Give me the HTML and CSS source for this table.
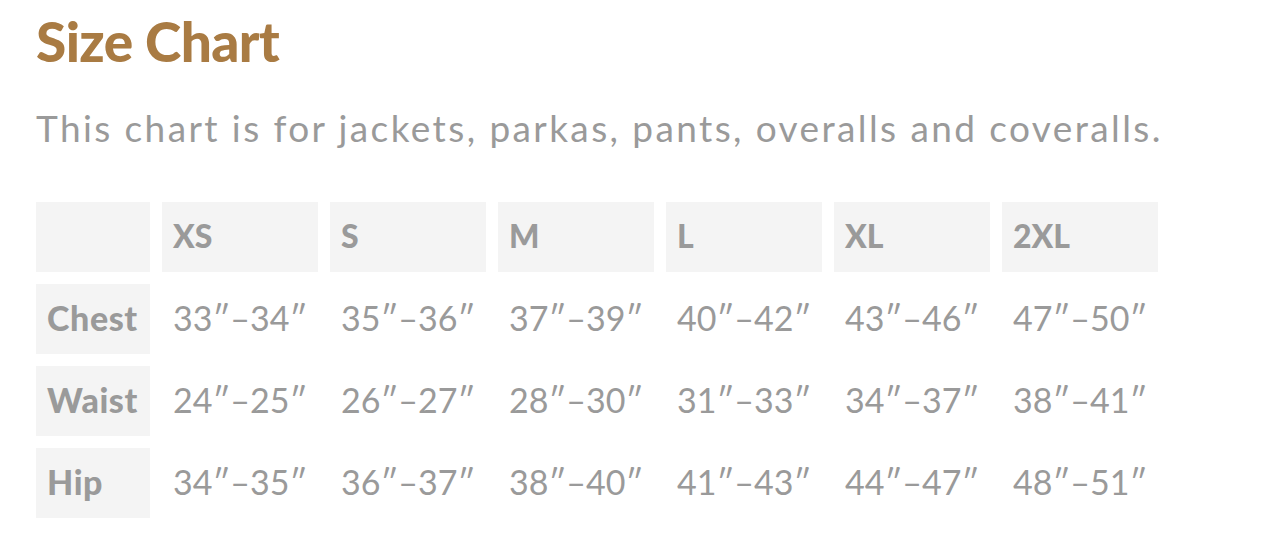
FILE: index.html
```html
<!DOCTYPE html>
<html lang="en">
<head>
<meta charset="utf-8">
<title>Size Chart</title>
<link rel="stylesheet" href="styles.css">
</head>
<body>
<main class="page">
  <h1 class="title">Size Chart</h1>
  <p class="intro">This chart is for jackets, parkas, pants, overalls and coveralls.</p>
  <div class="chart">
    <div class="cell head corner"></div>
    <div class="cell head">XS</div>
    <div class="cell head">S</div>
    <div class="cell head">M</div>
    <div class="cell head">L</div>
    <div class="cell head">XL</div>
    <div class="cell head">2XL</div>

    <div class="cell label">Chest</div>
    <div class="cell val">33″–34″</div>
    <div class="cell val">35″–36″</div>
    <div class="cell val">37″–39″</div>
    <div class="cell val">40″–42″</div>
    <div class="cell val">43″–46″</div>
    <div class="cell val">47″–50″</div>

    <div class="cell label">Waist</div>
    <div class="cell val">24″–25″</div>
    <div class="cell val">26″–27″</div>
    <div class="cell val">28″–30″</div>
    <div class="cell val">31″–33″</div>
    <div class="cell val">34″–37″</div>
    <div class="cell val">38″–41″</div>

    <div class="cell label">Hip</div>
    <div class="cell val">34″–35″</div>
    <div class="cell val">36″–37″</div>
    <div class="cell val">38″–40″</div>
    <div class="cell val">41″–43″</div>
    <div class="cell val">44″–47″</div>
    <div class="cell val">48″–51″</div>
  </div>
</main>
</body>
</html>
```

FILE: styles.css
```css
html, body {
  margin: 0;
  padding: 0;
  background: #ffffff;
}

.page {
  padding: 9px 36px 0 36px;
  font-family: "Lato", "Liberation Sans", sans-serif;
  color: #9a9a9a;
}

.title {
  margin: 0;
  font-size: 55px;
  line-height: 64px;
  font-weight: 900;
  letter-spacing: -0.6px;
  color: #a97b43;
}

.intro {
  margin: 33px 0 0 0;
  font-size: 37px;
  line-height: 44px;
  font-weight: 400;
  letter-spacing: 2.4px;
  color: #9a9a9a;
}

.chart {
  margin-top: 52px;
  display: grid;
  grid-template-columns: 114px repeat(6, 156px);
  grid-auto-rows: 70px;
  gap: 12px;
}

.cell {
  display: flex;
  align-items: center;
  padding: 0 11px 4px 11px;
  white-space: nowrap;
}

.head,
.label {
  background: #f4f4f4;
  font-weight: 900;
  color: #9a9a9a;
}

.head {
  font-size: 32px;
}

.label {
  font-size: 34px;
  letter-spacing: 0.6px;
}

.val {
  font-weight: 400;
  font-size: 34px;
}
```
